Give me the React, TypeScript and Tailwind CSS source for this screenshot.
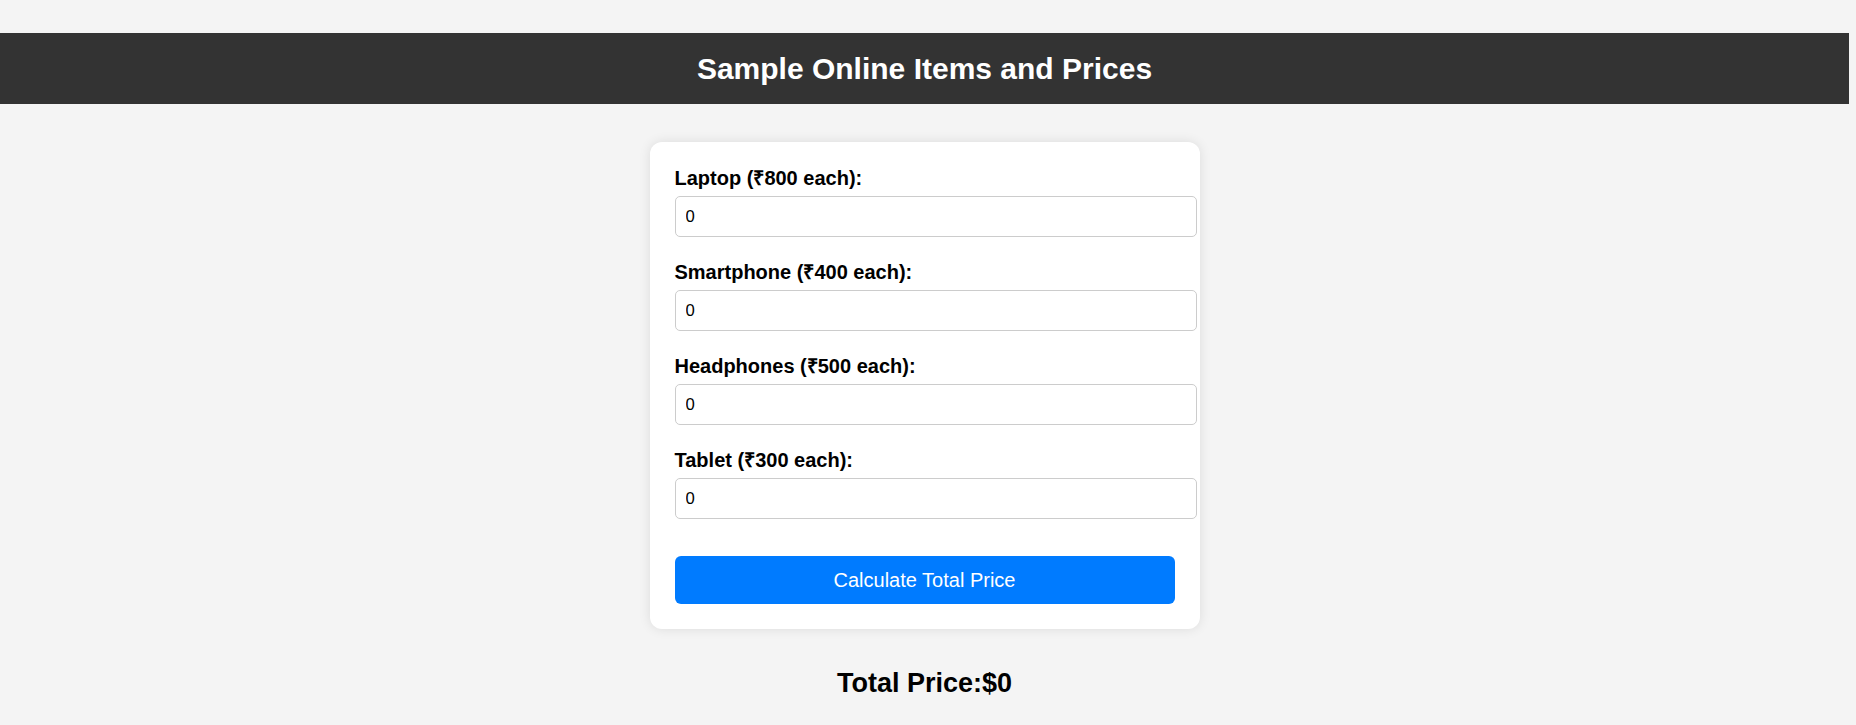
import React from "react";

const items = [
  { name: "Laptop", price: 800 },
  { name: "Smartphone", price: 400 },
  { name: "Headphones", price: 500 },
  { name: "Tablet", price: 300 },
];

export default function App() {
  return (
    <div
      className="w-full min-h-[725px] bg-[#f4f4f4] text-black"
      style={{ fontFamily: '"Liberation Sans", Arial, sans-serif' }}
    >
      <div className="w-[1849px] pt-[33px]">
        <header className="h-[71px] bg-[#333333] flex items-center justify-center">
          <h1 className="text-[30px] leading-[34px] font-bold text-white">
            Sample Online Items and Prices
          </h1>
        </header>

        <div className="mx-auto mt-[38px] w-[550px] p-[25px] bg-white rounded-[12px] shadow-[0_0_12px_rgba(0,0,0,0.1)] flex flex-col">
          {items.map((it) => (
            <div key={it.name} className="mb-[24px]">
              <label className="block text-[20px] leading-[23px] font-bold">
                {it.name} (₹{it.price} each):
              </label>
              <input
                type="number"
                defaultValue={0}
                className="mt-[6px] block w-[522px] max-w-none h-[41px] px-[10px] pt-[1px] border border-[#cccccc] rounded-[5px] bg-white text-[16.7px] text-black outline-none"
              />
            </div>
          ))}
          <button className="mt-[13px] block w-full h-[48px] bg-[#007bff] text-white text-[20px] rounded-[6px]">
            Calculate Total Price
          </button>
        </div>

        <h2 className="mt-[39px] text-center text-[27px] leading-[31px] font-bold">
          Total Price:$0
        </h2>
      </div>
    </div>
  );
}
